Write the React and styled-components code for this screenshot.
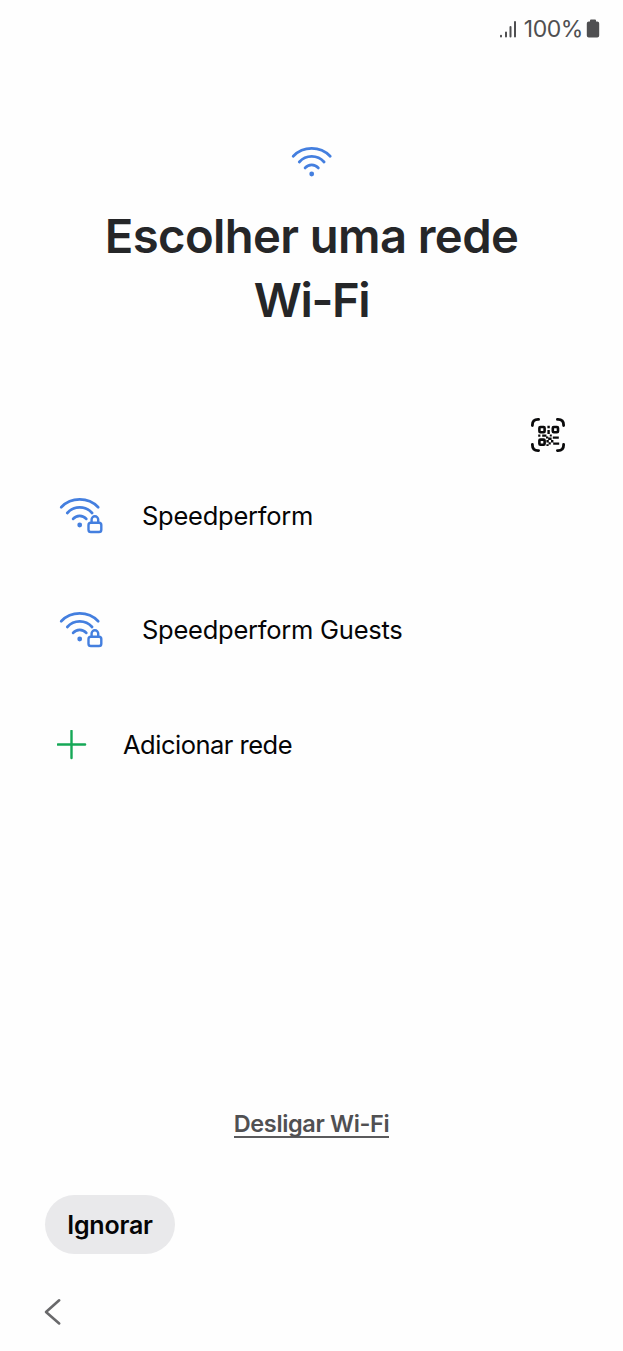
import React from 'react';
import styled, { createGlobalStyle } from 'styled-components';

const GlobalStyle = createGlobalStyle`
  * { box-sizing: border-box; }
  body { margin: 0; background: #fefefe; }
`;

const Screen = styled.main`
  display: flex;
  flex-direction: column;
  width: 623px;
  height: 1351px;
  background: #fefefe;
  color: #050506;
  font-family: Inter, 'Liberation Sans', sans-serif;
  overflow: hidden;
`;

const StatusBar = styled.header`
  display: flex;
  justify-content: flex-end;
  align-items: center;
  height: 58px;
  padding-right: 23px;
  color: #4f4f51;
`;

const BatteryText = styled.span`
  margin: 0 3px 0 7px;
  font-size: 23px;
  line-height: 28px;
  letter-spacing: -0.45px;
`;

const Icon = styled.svg`
  display: block;
  flex: none;
  fill: none;
  stroke: currentColor;
  stroke-linecap: round;
  stroke-linejoin: round;
`;

const Hero = styled.section`
  display: flex;
  flex-direction: column;
  align-items: center;
  height: 346px;
  padding-top: 86px;
  color: #447fdf;
`;

const Title = styled.h1`
  width: 460px;
  margin: 24px 0 0;
  color: #252628;
  font-size: 47.2px;
  font-weight: 600;
  line-height: 64px;
  letter-spacing: -0.6px;
  text-align: center;
`;

const TitleLine = styled.span`
  display: block;
  letter-spacing: ${({ $tracking }) => $tracking || 'inherit'};
`;

const Toolbar = styled.div`
  display: flex;
  justify-content: flex-end;
  height: 55px;
  padding: 12px 56px 0 0;
`;

const IconButton = styled.button`
  width: 38px;
  height: 38px;
  padding: 0;
  border: 0;
  background: none;
  color: #0a0a0b;
`;

const NetworkList = styled.ul`
  display: flex;
  flex-direction: column;
  margin: 0;
  padding: 0;
  list-style: none;
`;

const NetworkRow = styled.li`
  display: flex;
  align-items: center;
  height: ${({ $height }) => $height || 114}px;
  padding-left: 57px;
`;

const RowIcon = styled.span`
  display: flex;
  width: ${({ $width }) => $width}px;
  margin-bottom: ${({ $lift }) => $lift || 0}px;
  color: ${({ $color }) => $color};
`;

const RowLabel = styled.span`
  font-size: 25.5px;
  line-height: 32px;
  letter-spacing: ${({ $tracking }) => $tracking || '-0.25px'};
  white-space: nowrap;
`;

const Footer = styled.footer`
  display: flex;
  flex-direction: column;
  align-items: flex-start;
  margin-top: auto;
`;

const TextLink = styled.button`
  align-self: center;
  height: 28px;
  padding: 0;
  border: 0;
  border-bottom: 2px solid #5a5a5c;
  background: none;
  color: #505052;
  font: 600 23.5px/28px Inter, 'Liberation Sans', sans-serif;
  letter-spacing: -0.35px;
  white-space: nowrap;
`;

const PillButton = styled.button`
  width: 130px;
  height: 59px;
  margin: 57px 0 0 45px;
  padding: 0;
  border: 0;
  border-radius: 30px;
  background: #e9e9eb;
  color: #050506;
  font: 600 25px/32px Inter, 'Liberation Sans', sans-serif;
  letter-spacing: -0.2px;
`;

const NavBar = styled.nav`
  display: flex;
  height: 97px;
  padding: 43px 0 0 43px;
  color: #69696b;
`;

function WifiArcs() {
  return (
    <>
      <path d="M3.2 12.2A26 26 0 0 1 40.2 12.2" />
      <path d="M9.3 18A16.6 16.6 0 0 1 34.1 18" />
      <path d="M15.1 23.9A8.6 8.6 0 0 1 28.3 23.9" />
      <circle cx="21.7" cy="30" r="2.4" fill="currentColor" stroke="none" />
    </>
  );
}

function WifiIcon() {
  return (
    <Icon width="44" height="36" viewBox="0 0 44 36" strokeWidth="2.8">
      <WifiArcs />
    </Icon>
  );
}

function SecureWifiIcon() {
  return (
    <Icon width="48" height="40" viewBox="-1 0 48 40" strokeWidth="2.7">
      <WifiArcs />
      <rect x="30.5" y="27.8" width="12.8" height="9.2" rx="2.3" strokeWidth="2.4" />
      <path d="M33.6 27.2v-2.6a3.3 3.3 0 0 1 6.6 0v2.6" strokeWidth="2.4" />
    </Icon>
  );
}

function QrIcon() {
  return (
    <Icon width="38" height="38" viewBox="0 0 38 38" strokeWidth="2.8">
      <path d="M3.4 9.6V9q0-5.6 5.6-5.6h.6M28.4 3.4h.6q5.6 0 5.6 5.6v.6M34.6 28.4v.6q0 5.6-5.6 5.6h-.6M9.6 34.6H9q-5.6 0-5.6-5.6v-.6" />
      <g strokeWidth="2.6">
        <rect x="10.4" y="11" width="5.2" height="5.2" rx="1" />
        <rect x="23.8" y="11" width="5.2" height="5.2" rx="1" />
        <rect x="10.4" y="23.6" width="5.2" height="5.2" rx="1" />
      </g>
      <path
        fill="currentColor"
        stroke="none"
        d="M18.4 9.8h2.4v2.4h-2.4zM18.4 14h2.4v4h-2.4zM9.2 18.6h2.2v2.2H9.2zM13.2 18.6h4.2v2.2h-4.2zM17 20.4h2.2v2.2H17zM20.8 18.4h2v2.2h-2zM23.8 20.6h6v2.2h-6zM19.2 21.6h3.4v2.4h-3.4zM17.4 24h2.4v2.4h-2.4zM22 24h2.4v2.4H22zM19.6 26.2h2.2v2.2h-2.2zM24.2 26.6h6v2.2h-6zM17.4 28.2h2.2V30h-2.2z"
      />
    </Icon>
  );
}

export default function App() {
  return (
    <>
      <GlobalStyle />
      <Screen>
        <StatusBar>
          <Icon width="18" height="20" viewBox="0 0 18 20" strokeWidth="2">
            <path d="M2 17.4v-.6M7 17.4v-4M11.5 17.4V8M16 17.4V3" />
          </Icon>
          <BatteryText>100%</BatteryText>
          <Icon width="14" height="20" viewBox="0 0 14 20">
            <path
              fill="currentColor"
              stroke="none"
              d="M4 1.5Q4 .5 5 .5h4q1 0 1 1v1h1.2q2 0 2 2v12q0 2-2 2H2.8q-2 0-2-2v-12q0-2 2-2H4z"
            />
          </Icon>
        </StatusBar>
        <Hero>
          <WifiIcon />
          <Title>
            <TitleLine>Escolher uma rede </TitleLine>
            <TitleLine $tracking="-1.4px">Wi-Fi</TitleLine>
          </Title>
        </Hero>
        <Toolbar>
          <IconButton aria-label="QR">
            <QrIcon />
          </IconButton>
        </Toolbar>
        <NetworkList>
          {['Speedperform', 'Speedperform Guests'].map((name) => (
            <NetworkRow key={name}>
              <RowIcon $width={85} $lift={3} $color="#447fdf">
                <SecureWifiIcon />
              </RowIcon>
              <RowLabel>{name}</RowLabel>
            </NetworkRow>
          ))}
          <NetworkRow $height={115}>
            <RowIcon $width={66} $color="#16a857">
              <Icon width="30" height="30" viewBox="0 0 30 30" strokeWidth="2.4">
                <path d="M.9 14.5h27.2M14.5.9v27.2" />
              </Icon>
            </RowIcon>
            <RowLabel $tracking="-0.5px">Adicionar rede</RowLabel>
          </NetworkRow>
        </NetworkList>
        <Footer>
          <TextLink>Desligar Wi-Fi</TextLink>
          <PillButton>Ignorar</PillButton>
          <NavBar>
            <Icon width="20" height="30" viewBox="0 0 20 30" strokeWidth="2.6">
              <path d="M16.2 3.3L3 15l13.2 11.4" />
            </Icon>
          </NavBar>
        </Footer>
      </Screen>
    </>
  );
}
